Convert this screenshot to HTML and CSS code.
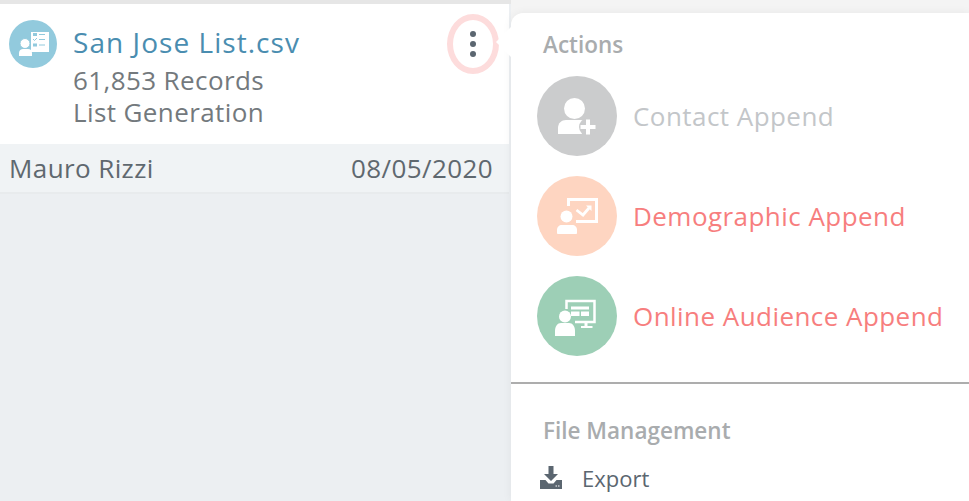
FILE: index.html
```html
<!DOCTYPE html>
<html>
<head>
    <meta charset="UTF-8">
    <meta name="viewport" content="width=device-width, initial-scale=1.0">
    <title>List actions</title>
    <link rel="stylesheet" href="styles.css">
</head>
<body>
    <div class="page">
        <div class="list-col">
            <div class="card">
                <div class="card-main">
                    <div class="file-icon">
                        <svg width="48" height="48" viewBox="0 0 48 48">
                            <rect x="22" y="12" width="18" height="20" fill="#fff"/>
                            <path d="M24 13h4v3h-4zM24 23.500h4v3h-4z" fill="#92cadd"/>
                            <path d="M24 19l1.500 1.500L28 18" fill="none" stroke="#92cadd" stroke-width="1"/>
                            <path d="M30 14.500h6M30 19.500h6M30 25h6" stroke="#92cadd" stroke-width="1"/>
                            <circle cx="16" cy="23.500" r="5" fill="#fff" stroke="#92cadd" stroke-width="1"/>
                            <path d="M10 36v-3c0-2.500 2-4 4-4h5c2.500 0 4 1.500 4 4v3z" fill="#fff"/>
                        </svg>
                    </div>
                    <div class="file-text">
                        <div class="file-name">San Jose List.csv</div>
                        <div class="file-meta">61,853 Records</div>
                        <div class="file-meta">List Generation</div>
                    </div>
                    <div class="more-btn"><span></span><span></span><span></span></div>
                </div>
                <div class="card-foot">
                    <span>Mauro Rizzi</span>
                    <span>08/05/2020</span>
                </div>
            </div>
        </div>
        <div class="menu">
            <div class="menu-arrow"></div>
            <div class="section actions">
                <div class="section-title">Actions</div>
                <div class="action">
                    <div class="action-icon grey">
                        <svg width="80" height="80" viewBox="0 0 80 80">
                            <circle cx="37.500" cy="32.500" r="10.500" fill="#fff"/>
                            <path d="M21 58v-6c0-5 3.500-8 8-8h15c4 0 7 1.500 9 4v10z" fill="#fff"/>
                            <circle cx="51" cy="51" r="9" fill="#cbcccd"/>
                            <path d="M51 43.500v15M43.500 51h15" stroke="#fff" stroke-width="4"/>
                        </svg>
                    </div>
                    <span class="action-label off">Contact Append</span>
                </div>
                <div class="action">
                    <div class="action-icon peach">
                        <svg width="80" height="80" viewBox="0 0 80 80">
                            <path d="M31.500 30v-6.500h28v22H39" fill="none" stroke="#fff" stroke-width="3"/>
                            <path d="M39.500 34l6.500 5 6-7" fill="none" stroke="#fff" stroke-width="2.800"/>
                            <path d="M49 29.500h5.500v5.500z" fill="#fff"/>
                            <circle cx="29.500" cy="40.500" r="6" fill="#fff"/>
                            <path d="M20 57v-3c0-3 2-5 5-5h10c3 0 5 2 5 5v3c0 .5-.5 1-1 1H21c-.5 0-1-.5-1-1z" fill="#fff"/>
                        </svg>
                    </div>
                    <span class="action-label">Demographic Append</span>
                </div>
                <div class="action">
                    <div class="action-icon green">
                        <svg width="80" height="80" viewBox="0 0 80 80">
                            <path d="M29.500 33v-8h28v21H38" fill="none" stroke="#fff" stroke-width="2.500"/>
                            <path d="M34 30.500h18v3H34zM34 35.500h8.500v4.500H34zM44 35.500h8v4.500h-8z" fill="#fff"/>
                            <path d="M47.500 46h3v4h5v2H44v-2h3.500z" fill="#fff"/>
                            <circle cx="28" cy="40.500" r="6" fill="#fff"/>
                            <path d="M18 60v-5c0-4.500 2.500-8 6-8h8c3.500 0 6 3.500 6 8v5z" fill="#fff"/>
                        </svg>
                    </div>
                    <span class="action-label">Online Audience Append</span>
                </div>
            </div>
            <div class="section files">
                <div class="section-title">File Management</div>
                <div class="file-row">
                    <svg width="24" height="24" viewBox="0 0 24 24">
                        <path d="M9.500 0h5v8h4.500l-7 7-7-7h4.500z" fill="#5b6670"/>
                        <path d="M1 14h5.500l3 3.500h5l3-3.500H23v9H1z" fill="#5b6670"/>
                        <path d="M16.500 20h1.500M19 20h1.500" stroke="#fff" stroke-width="1.200"/>
                    </svg>
                    <span>Export</span>
                </div>
            </div>
        </div>
    </div>
</body>
</html>
```

FILE: styles.css
```css
html, body {
    margin: 0;
    height: 100%;
    overflow: hidden;
}
body {
    font-family: "Open Sans", sans-serif;
    background-color: #f4f4f4;
    color: #5b6670;
}
.page {
    display: flex;
    height: 501px;
}
.list-col {
    width: 511px;
    padding: 4px 2px 0 0;
    background-color: #eceff2;
    box-sizing: border-box;
    box-shadow: inset 0 4px 0 #e6e6e6;
}
.card {
    background-color: #fff;
}
.card-main {
    display: flex;
    height: 140px;
    box-sizing: border-box;
    padding: 16px 10px 0 9px;
}
.file-icon {
    width: 48px;
    height: 48px;
    border-radius: 50%;
    background-color: #92cadd;
    flex-shrink: 0;
}
.file-text {
    flex: 1;
    margin-left: 16px;
}
.file-name {
    font-size: 28px;
    line-height: 36px;
    color: #4a8db0;
    letter-spacing: 1.05px;
    margin: 4px 0;
}
.file-meta {
    font-size: 26px;
    line-height: 32px;
    color: #73797d;
    letter-spacing: 0.4px;
}
.more-btn {
    width: 52px;
    height: 60px;
    box-sizing: border-box;
    border: 6px solid #fddcdc;
    border-radius: 26px / 30px;
    margin: -6px 0 0 0;
    display: flex;
    flex-direction: column;
    align-items: center;
    justify-content: center;
    gap: 4px;
}
.more-btn span {
    width: 6px;
    height: 6px;
    border-radius: 50%;
    background-color: #5b6670;
}
.card-foot {
    display: flex;
    justify-content: space-between;
    align-items: center;
    height: 50px;
    box-sizing: border-box;
    padding: 0 16px 0 9px;
    background-color: #f0f3f5;
    border-bottom: 2px solid #e8ebed;
    font-size: 26px;
    letter-spacing: 0.4px;
    color: #5f686f;
}
.menu {
    position: relative;
    flex: 1;
    margin-top: 13px;
    background-color: #fff;
    border-top-left-radius: 12px;
    box-shadow: 0 0 10px rgba(0, 0, 0, 0.06);
}
.menu-arrow {
    position: absolute;
    left: -15px;
    top: 14px;
    width: 0;
    height: 0;
    border-top: 15px solid transparent;
    border-bottom: 15px solid transparent;
    border-right: 15px solid #fff;
}
.section-title {
    font-size: 22.500px;
    line-height: 28px;
    font-weight: 600;
    color: #a9acae;
    margin-left: 32px;
}
.actions {
    height: 371px;
    box-sizing: border-box;
    padding-top: 18px;
    border-bottom: 2px solid #adadad;
}
.action {
    display: flex;
    align-items: center;
    gap: 16px;
    height: 80px;
    margin: 0 0 20px 26px;
}
.section-title + .action {
    margin-top: 17px;
}
.action-icon {
    width: 80px;
    height: 80px;
    border-radius: 50%;
}
.action-icon svg {
    display: block;
}
.grey { background-color: #cbcccd; }
.peach { background-color: #fed5c1; }
.green { background-color: #9dcfb6; }
.action-label {
    font-size: 26px;
    letter-spacing: 0.45px;
    color: #f77e7e;
}
.action-label.off {
    color: #c3c6c9;
}
.files {
    padding-top: 33px;
}
.file-row {
    display: flex;
    align-items: center;
    gap: 19px;
    margin: 18px 0 0 28px;
    font-size: 22px;
    color: #5b6670;
}
```
